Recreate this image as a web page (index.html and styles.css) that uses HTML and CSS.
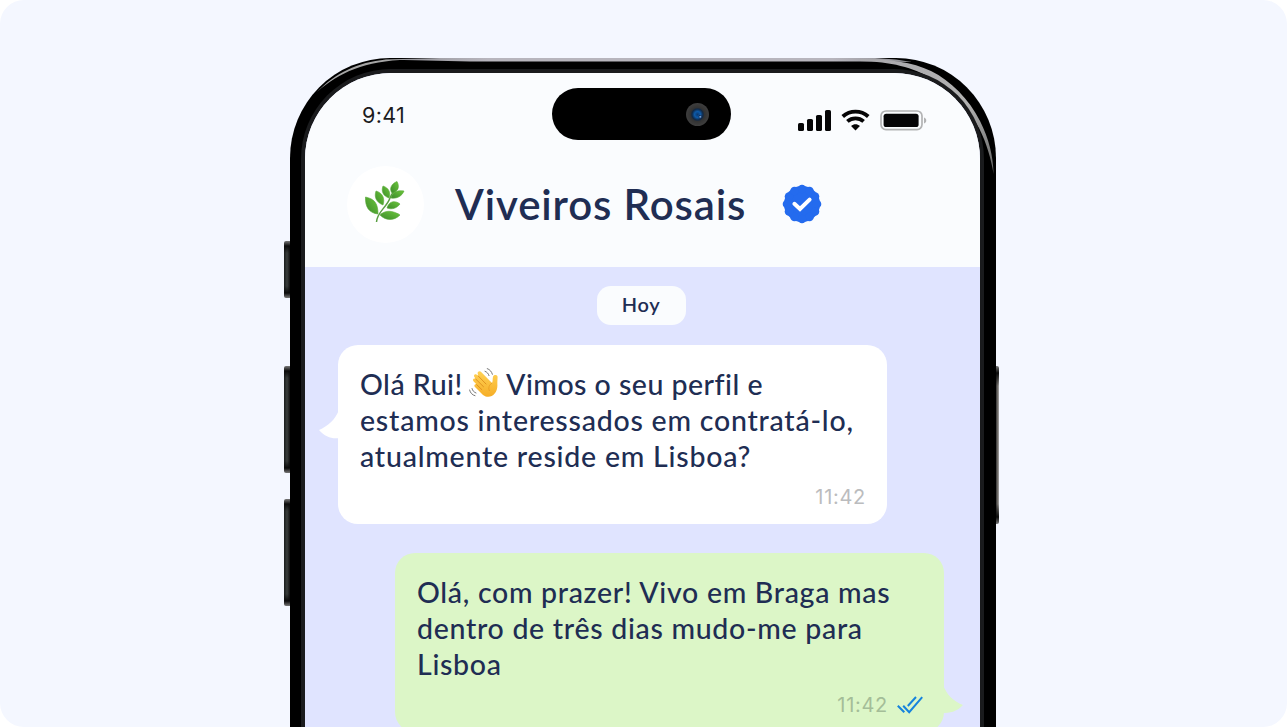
FILE: index.html
```html
<!DOCTYPE html>
<html lang="pt">

<head>
    <meta charset="UTF-8">
    <meta name="viewport" content="width=device-width, initial-scale=1.0">
    <title>Viveiros Rosais</title>
    <link rel="stylesheet" href="styles.css">
</head>

<body>
    <div class="stage">
        <div class="phone">
            <!-- Botões laterais -->
            <span class="side-button left silent"></span>
            <span class="side-button left vol-up"></span>
            <span class="side-button left vol-down"></span>
            <span class="side-button right power"></span>

            <!-- Reflexos da moldura -->
            <svg class="frame-shine" viewBox="0 0 706 130">
                <defs>
                    <linearGradient id="shineTop" x1="0" x2="1" y1="0" y2="0">
                        <stop offset="0" stop-color="#8d8d92" />
                        <stop offset="0.2" stop-color="#b7b5bd" />
                        <stop offset="0.85" stop-color="#b7b5bd" />
                        <stop offset="1" stop-color="#8d8d92" />
                    </linearGradient>
                    <linearGradient id="shineRight" x1="0" x2="1" y1="0" y2="1">
                        <stop offset="0" stop-color="#aaa9ad" />
                        <stop offset="0.6" stop-color="#b2b2b2" />
                        <stop offset="1" stop-color="#666" />
                    </linearGradient>
                </defs>
                <path d="M92 1.4 L150 0 H585 L606 1.6 L622 4 L590 3.4 H180 Z" fill="url(#shineTop)" />
                <path d="M570 1 C600 1 622 4 641 13 C661 23 679 41 690 63 C699 81 703 97 703.6 116 C701 101 697 86 689 70 C678 50 662 33 643 21 C622 9 602 4 570 3 Z" fill="url(#shineRight)" />
                <path d="M27 34 C46 15 67 4.5 96 1.6 L118 1.5 C74 3.4 50 14 27 34 Z" fill="#a5a5a5" />
            </svg>

            <div class="screen">
                <div class="header">
                    <div class="status-bar">
                        <span class="clock">9:41</span>
                        <div class="island"><span class="lens"></span></div>
                        <div class="status-icons">
                            <svg class="signal" viewBox="0 0 33 21">
                                <rect x="0" y="13" width="6" height="8" rx="1.6" />
                                <rect x="9" y="9" width="6" height="12" rx="1.6" />
                                <rect x="18" y="5" width="6" height="16" rx="1.6" />
                                <rect x="27" y="0" width="6" height="21" rx="1.6" />
                            </svg>
                            <svg class="wifi" viewBox="0 0 30 22">
                                <path d="M1.8 7.4 C9.5 .6 20.5 .6 28.2 7.4" />
                                <path d="M6.6 12.4 C11.4 8.3 18.6 8.3 23.4 12.4" />
                                <path class="dot" d="M15 21.8 L10.4 17.1 C13.2 14.8 16.8 14.8 19.6 17.1 Z" />
                            </svg>
                            <svg class="battery" viewBox="0 0 47 21">
                                <rect x="1" y="1" width="41" height="18.6" rx="5" fill="none" stroke="#b2b3b4" stroke-width="1.7" />
                                <rect x="3.6" y="3.7" width="35" height="13.3" rx="2.6" />
                                <path d="M44 7.5 C47 8.5 47 12.5 44 13.5 Z" fill="#b2b3b4" />
                            </svg>
                        </div>
                    </div>
                    <div class="contact">
                        <div class="avatar">
                            <svg class="leaf" viewBox="0 0 40 42">
                                <defs>
                                    <linearGradient id="leafFill" x1="0" x2="1" y1="1" y2="0">
                                        <stop offset="0" stop-color="#3c8a2c" />
                                        <stop offset="1" stop-color="#6cc73a" />
                                    </linearGradient>
                                </defs>
                                <path d="M11.5 41 C12 31 22 26 25 17 C26 14 28 11 31 9" fill="none" stroke="#5a9f42" stroke-width="1.5" />
                                <g class="leaves" fill="url(#leafFill)">
                                    <path d="M32 .5 C35 6 33 11 27 12 C24 8 26 3 32 .5Z" />
                                    <path d="M18 5 C24 7 26 12 24 17 C18 15 16 10 18 5Z" />
                                    <path d="M26 17 C27 11 32 9 39 10 C37 15 32 18 26 17Z" />
                                    <path d="M11 10 C18 12 20 18 18 24 C11 21 9 16 11 10Z" />
                                    <path d="M22 27 C24 20 30 19 35 23 C32 27 27 29 22 27Z" />
                                    <path d="M.5 16 C10 18 13 23 13 33 C4 32 0 26 .5 16Z" />
                                    <path d="M15 34 C20 29 27 29 35 34 C29 40 21 40 15 34Z" />
                                </g>
                            </svg>
                        </div>
                        <h1 class="name">Viveiros Rosais</h1>
                        <svg class="verified" viewBox="-20 -20 40 40">
                            <g fill="#246bee">
                                <circle r="18" />
                                <circle cx="0" cy="-15" r="4.3" />
                                <circle cx="7.5" cy="-13" r="4.3" />
                                <circle cx="13" cy="-7.5" r="4.3" />
                                <circle cx="15" cy="0" r="4.3" />
                                <circle cx="13" cy="7.5" r="4.3" />
                                <circle cx="7.5" cy="13" r="4.3" />
                                <circle cx="0" cy="15" r="4.3" />
                                <circle cx="-7.5" cy="13" r="4.3" />
                                <circle cx="-13" cy="7.5" r="4.3" />
                                <circle cx="-15" cy="0" r="4.3" />
                                <circle cx="-13" cy="-7.5" r="4.3" />
                                <circle cx="-7.5" cy="-13" r="4.3" />
                            </g>
                            <path d="M-7.6 -.2 L-2 5 L7.6 -4.4" fill="none" stroke="#fff" stroke-width="4" stroke-linecap="round" />
                        </svg>
                    </div>
                </div>

                <div class="chat">
                    <div class="day">Hoy</div>

                    <div class="bubble received">
                        <svg class="tail" viewBox="0 0 20 29">
                            <path d="M20 0 C16 10 9 16 0 20 C6 27 13 29 20 28 Z" />
                        </svg>
                        <p class="line first">Olá Rui! <svg class="wave" viewBox="0 0 30 30">
                                <defs>
                                    <linearGradient id="skin" x1="0" x2="0" y1="0" y2="1">
                                        <stop offset="0" stop-color="#ffd154" />
                                        <stop offset="1" stop-color="#f6ae27" />
                                    </linearGradient>
                                </defs>
                                <path d="M14 27 L6 19 C4.5 17.5 6 15.5 7.6 16.6 L4.5 13.2 C3 11.5 5 9.5 6.7 11 L5.4 9 C4 7 6.4 5.2 8 6.8 L9.2 8 L8.8 6 C8 3.6 10.8 2.4 12.4 4.3 L23 15 C24 13.5 23.4 11 24 8.7 C24.4 6.5 28.5 6.6 28.6 9 C28.6 11 28.2 14 28.4 17 C28.7 26 21 32 14 27 Z" fill="url(#skin)" />
                                <path d="M9.2 8 L17 16 M6.7 11 L14.5 18.7 M7.6 16.6 L12.8 21.6" fill="none" stroke="#dc8d1d" stroke-width="0.9" stroke-linecap="round" />
                                <path d="M23 15 C20 17 19 20 20.5 23" fill="none" stroke="#e99b22" stroke-width="0.8" />
                                <path d="M16 3.3 C18 4 19.3 5.4 20 7.6 M18.2 .6 C21 1.6 22.6 3.6 23.4 6.3 M3 20.5 C3.6 22.8 5 24.3 7 25 M.6 22 C1.3 25 3.3 27 6 27.7" fill="none" stroke="#777" stroke-width="1" stroke-linecap="round" />
                            </svg> Vimos o seu perfil e</p>
                        <p class="line">estamos interessados em contratá-lo,</p>
                        <p class="line">atualmente reside em Lisboa?</p>
                        <div class="meta"><span class="time">11:42</span></div>
                    </div>

                    <div class="bubble sent">
                        <svg class="tail" viewBox="0 0 20 29">
                            <path d="M0 0 C4 10 10 16 20 20 C14 27 6 28 0 28 Z" />
                        </svg>
                        <p class="line">Olá, com prazer! Vivo em Braga mas</p>
                        <p class="line">dentro de três dias mudo-me para</p>
                        <p class="line">Lisboa</p>
                        <div class="meta">
                            <span class="time">11:42</span>
                            <svg class="checks" viewBox="0 0 26 18">
                                <path d="M.8 9.8 L7.3 16.3 M6.2 9.8 L12.2 16.2 L25.2 1.2 M10.8 10 L19 1" />
                            </svg>
                        </div>
                    </div>
                </div>
            </div>
        </div>
    </div>
</body>

</html>
```

FILE: styles.css
```css
* {
    box-sizing: border-box;
}

body {
    margin: 0;
    background-color: #fff;
    font-family: Lato, "Open Sans", sans-serif;
    color: #202d53;
    overflow: hidden;
}

.stage {
    display: flex;
    justify-content: center;
    width: 1287px;
    height: 727px;
    padding-top: 58px;
    padding-right: 1px;
    background-color: #f4f7ff;
    border-radius: 24px;
    overflow: hidden;
}

.phone {
    position: relative;
    flex-shrink: 0;
    width: 706px;
    height: 900px;
    padding: 15px 16px 15px 15px;
    background-color: #000;
    border-radius: 100px;
}

.frame-shine {
    position: absolute;
    top: 0;
    left: 0;
    width: 706px;
    height: 130px;
}

.side-button {
    position: absolute;
    width: 6px;
    border-radius: 2px 0 0 2px;
    background: linear-gradient(to bottom, #777 0, #0b0b0b 5px, transparent 12px, transparent calc(100% - 12px), #0b0b0b calc(100% - 5px), #777 100%), linear-gradient(to right, #191c1c, #3a3e3d 50%, #111);
}

.side-button.left {
    left: -6px;
}

.silent {
    top: 183px;
    height: 57px;
}

.vol-up {
    top: 308px;
    height: 107px;
}

.vol-down {
    top: 441px;
    height: 107px;
}

.power {
    top: 308px;
    right: -3px;
    width: 3px;
    height: 158px;
    border-radius: 0 2px 2px 0;
    background: linear-gradient(to bottom, #777 0, #0b0b0b 7px, transparent 20px, transparent calc(100% - 20px), #0b0b0b calc(100% - 7px), #777 100%), linear-gradient(to right, #333, #77736f 60%, #aaa);
}

.screen {
    position: relative;
    height: 100%;
    border-radius: 86px;
    background-color: #e0e4ff;
    box-shadow: 0 0 0 4px #1a1b1d;
    overflow: hidden;
}

.header {
    height: 194px;
    padding: 15px 53px 0 57px;
    background-color: #fafcfe;
}

.status-bar {
    display: flex;
    height: 52px;
}

.clock {
    width: 190px;
    padding-top: 13px;
    font-family: Inter, sans-serif;
    font-size: 21.5px;
    line-height: 28px;
    color: #1c1c1e;
    letter-spacing: 0.3px;
}

.island {
    display: flex;
    justify-content: flex-end;
    align-items: center;
    width: 179px;
    margin-left: 1px;
    padding-right: 22px;
    background-color: #000;
    border-radius: 26px;
}

.lens {
    width: 23px;
    height: 23px;
    border-radius: 50%;
    background: radial-gradient(circle at 62% 60%, #8ec4ff 0, #12305a 1.5px, transparent 2px), radial-gradient(circle, #0c3970 0, #0d5aa8 3px, #102846 5.5px, #333 7px, #3d3d3d 11px);
}

.status-icons {
    display: flex;
    align-items: flex-end;
    gap: 10px;
    padding: 0 0 9px 67px;
}

.status-icons svg {
    flex-shrink: 0;
    fill: #050506;
}

.signal {
    width: 33px;
    height: 21px;
}

.wifi {
    width: 29px;
    height: 22px;
}

.wifi path {
    fill: none;
    stroke: #050506;
    stroke-width: 4;
}

.wifi .dot {
    fill: #050506;
    stroke: none;
}

.battery {
    width: 47px;
    height: 21px;
}

.contact {
    display: flex;
    align-items: center;
    height: 77px;
    margin: 26px 0 0 -15px;
}

.avatar {
    display: flex;
    justify-content: center;
    align-items: center;
    width: 77px;
    height: 77px;
    padding-right: 1px;
    padding-bottom: 6px;
    background-color: #fff;
    border-radius: 50%;
}

.leaf {
    width: 40px;
    height: 42px;
}

.leaves {
    stroke: #57a737;
    stroke-width: 0.6;
}

.name {
    width: 327px;
    margin: 0 0 1px 31px;
    font-size: 42px;
    line-height: 52px;
    font-weight: 600;
    letter-spacing: 0.87px;
    white-space: nowrap;
}

.verified {
    width: 40px;
    height: 40px;
    margin-bottom: 1px;
}

.chat {
    display: flex;
    flex-direction: column;
    padding: 19px 36px 0 33px;
}

.day {
    align-self: center;
    width: 89px;
    height: 39px;
    border-radius: 14px;
    background-color: #fafcfe;
    font-size: 20px;
    line-height: 37px;
    font-weight: 600;
    letter-spacing: 0.6px;
    text-align: center;
}

.bubble {
    position: relative;
    width: 549px;
    height: 179px;
    padding: 21px 22px;
    border-radius: 20px;
}

.received {
    margin-top: 20px;
    background-color: #fff;
}

.sent {
    align-self: flex-end;
    margin-top: 29px;
    background-color: #dcf6c7;
}

.tail {
    position: absolute;
    width: 20px;
    height: 29px;
}

.received .tail {
    left: -19px;
    top: 65px;
    fill: #fff;
}

.sent .tail {
    right: -19px;
    top: 132px;
    fill: #dcf6c7;
}

.line {
    height: 36px;
    margin: 0;
    font-size: 28.5px;
    line-height: 36px;
    font-weight: 500;
    letter-spacing: 0.78px;
    white-space: nowrap;
}

.first {
    letter-spacing: 0.48px;
}

.sent .line {
    letter-spacing: 0.7px;
}

.wave {
    width: 30px;
    height: 30px;
    margin-left: -1px;
    vertical-align: -3px;
}

.meta {
    display: flex;
    justify-content: flex-end;
    align-items: center;
    gap: 9px;
    height: 24px;
    margin-top: 11px;
}

.time {
    margin-right: -1px;
    font-family: Inter, sans-serif;
    font-size: 20px;
    line-height: 24px;
    letter-spacing: 0.7px;
    color: #bbbcbe;
}

.sent .time {
    margin-right: 0;
    color: #a4bd98;
}

.checks {
    width: 26px;
    height: 18px;
    margin-right: -1px;
    fill: none;
    stroke: #1683dd;
    stroke-width: 2;
}
```
